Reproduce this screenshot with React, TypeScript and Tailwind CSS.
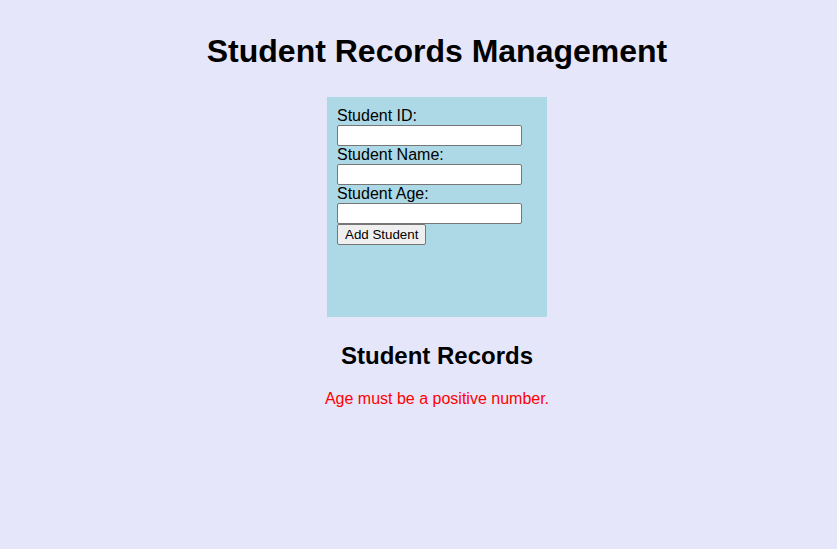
export default function App() {
  return (
    <div className="min-h-screen bg-[#e6e6fa] pl-[37px] text-center text-black font-['Liberation_Sans',Arial,sans-serif]">
      <h1 className="pt-[33px] text-[32px] font-bold leading-[37px]">
        Student Records Management
      </h1>

      <form
        className="mx-auto mt-[27px] h-[220px] w-[220px] bg-[#add8e6] p-[10px] text-left"
        onSubmit={(e) => e.preventDefault()}
      >
        <label className="block text-[16px] leading-[18px]">Student ID:</label>
        <input
          type="text"
          className="block h-[21px] w-[185px] rounded-[2px] border border-[#767676] bg-white px-[2px] text-[13px]"
        />
        <label className="block text-[16px] leading-[18px]">Student Name:</label>
        <input
          type="text"
          className="block h-[21px] w-[185px] rounded-[2px] border border-[#767676] bg-white px-[2px] text-[13px]"
        />
        <label className="block text-[16px] leading-[18px]">Student Age:</label>
        <input
          type="text"
          className="block h-[21px] w-[185px] rounded-[2px] border border-[#767676] bg-white px-[2px] text-[13px]"
        />
        <button
          type="submit"
          className="block h-[21px] rounded-[2px] border border-[#767676] bg-[#efefef] px-[7px] text-[13.33px] leading-[15px]"
        >
          Add Student
        </button>
      </form>

      <h2 className="mt-[25px] text-[24px] font-bold leading-[28px]">Student Records</h2>
      <p className="mt-[20px] text-[16px] leading-[18px] text-[#ff0000]">
        Age must be a positive number.
      </p>
    </div>
  );
}
